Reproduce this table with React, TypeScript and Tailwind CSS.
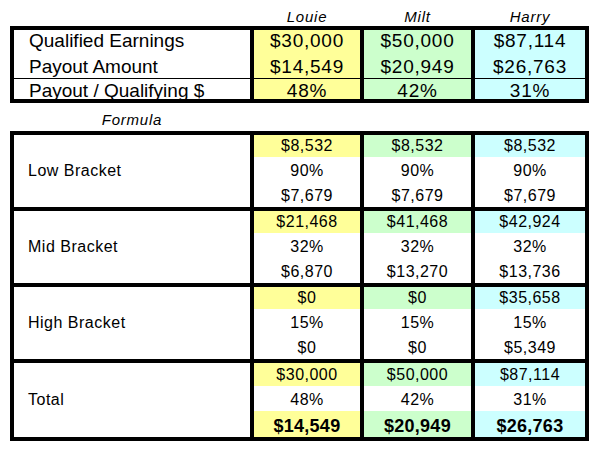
import React from "react";

const font = { fontFamily: '"Liberation Sans", Arial, sans-serif' };

type Col = { name: string; bg: string };
const people: Col[] = [
  { name: "Louie", bg: "bg-[#ffff99]" },
  { name: "Milt", bg: "bg-[#ccffcc]" },
  { name: "Harry", bg: "bg-[#ccffff]" },
];

const top = {
  earn: ["$30,000", "$50,000", "$87,114"],
  pay: ["$14,549", "$20,949", "$26,763"],
  pct: ["48%", "42%", "31%"],
};

const sections: { label: string; rows: string[][]; total?: boolean }[] = [
  { label: "Low Bracket", rows: [["$8,532", "90%", "$7,679"], ["$8,532", "90%", "$7,679"], ["$8,532", "90%", "$7,679"]] },
  { label: "Mid Bracket", rows: [["$21,468", "32%", "$6,870"], ["$41,468", "32%", "$13,270"], ["$42,924", "32%", "$13,736"]] },
  { label: "High Bracket", rows: [["$0", "15%", "$0"], ["$0", "15%", "$0"], ["$35,658", "15%", "$5,349"]] },
  { label: "Total", rows: [["$30,000", "48%", "$14,549"], ["$50,000", "42%", "$20,949"], ["$87,114", "31%", "$26,763"]], total: true },
];

export default function App() {
  return (
    <div className="w-[600px] h-[451px] bg-white text-black overflow-hidden" style={font}>
      {/* header names */}
      <div className="ml-[14px] h-[26px] grid grid-cols-[236px_106px_107px_110px] gap-x-[4px]">
        <div />
        {people.map((p) => (
          <div key={p.name} className="flex items-end justify-center pb-[1.5px] italic text-[15px] leading-[17px] tracking-[0.75px]">
            {p.name}
          </div>
        ))}
      </div>

      {/* top table */}
      <div className="ml-[10px] w-[579px] border-4 border-black bg-black">
        <div className="grid grid-cols-[236px_106px_107px_110px] gap-x-[4px] gap-y-[1px] text-[19px]">
          <div className="bg-white pl-[15px]">
            <div className="h-[24px] flex items-end pb-[2px] leading-[22px]">Qualified Earnings</div>
            <div className="h-[24px] flex items-end leading-[22px]">Payout Amount</div>
          </div>
          {people.map((p, i) => (
            <div key={p.name} className={`${p.bg} tracking-[0.75px]`}>
              <div className="h-[24px] flex items-end justify-center pb-[2px] leading-[22px]">{top.earn[i]}</div>
              <div className="h-[24px] flex items-end justify-center leading-[22px]">{top.pay[i]}</div>
            </div>
          ))}
          <div className="bg-white pl-[15px] h-[20px] flex items-end leading-[17px]">Payout / Qualifying $</div>
          {people.map((p, i) => (
            <div key={p.name} className={`${p.bg} h-[20px] flex items-end justify-center leading-[17px] tracking-[0.75px]`}>
              {top.pct[i]}
            </div>
          ))}
        </div>
      </div>

      {/* formula label */}
      <div className="ml-[14px] w-[236px] h-[28px] flex items-end justify-center pb-[3px] italic text-[15px] leading-[17px] tracking-[0.75px]">
        Formula
      </div>

      {/* bottom table */}
      <div className="ml-[10px] w-[579px] border-4 border-black bg-black">
        <div className="grid grid-cols-[236px_106px_107px_110px] gap-[4px] text-[16px] tracking-[0.5px]">
          {sections.map((s) => (
            <React.Fragment key={s.label}>
              <div className="bg-white pl-[14px] flex items-center leading-[18px]">{s.label}</div>
              {people.map((p, i) => (
                <div key={p.name} className="flex flex-col bg-white">
                  <div className={`${p.bg} ${s.total ? "h-[23px]" : "h-[22px]"} flex items-end justify-center pb-[2px] leading-[18px]`}>
                    {s.rows[i][0]}
                  </div>
                  <div className="h-[25px] flex items-end justify-center pb-[2px] leading-[18px]">{s.rows[i][1]}</div>
                  {s.total ? (
                    <div className={`${p.bg} h-[26px] flex items-end justify-center pb-[1px] leading-[20px] font-bold text-[18px] tracking-[0.25px]`}>
                      {s.rows[i][2]}
                    </div>
                  ) : (
                    <div className="h-[25px] flex items-end justify-center pb-[2px] leading-[18px]">{s.rows[i][2]}</div>
                  )}
                </div>
              ))}
            </React.Fragment>
          ))}
        </div>
      </div>
    </div>
  );
}
